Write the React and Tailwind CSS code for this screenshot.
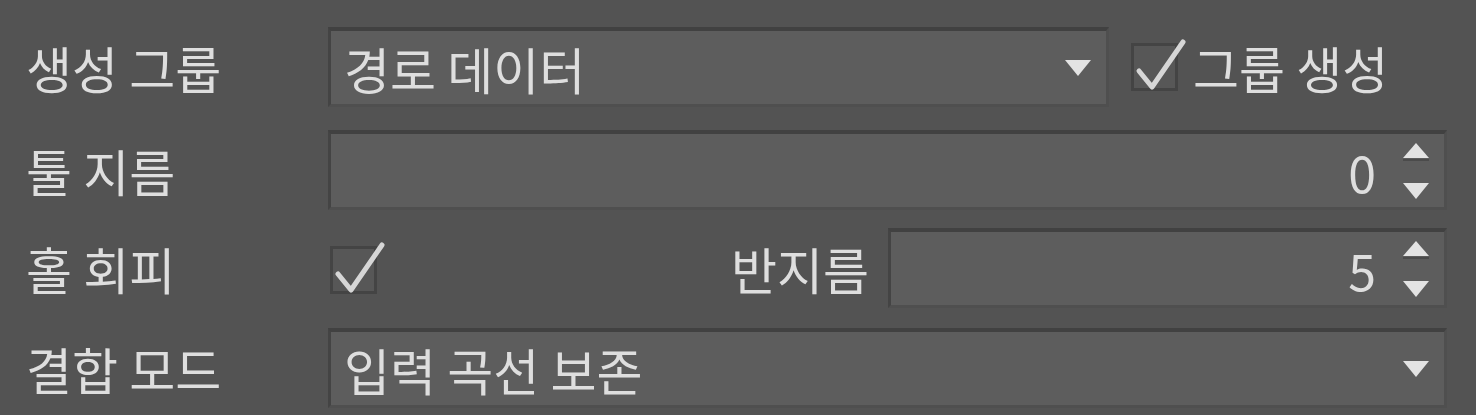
import React from "react";

const font = { fontFamily: '"Noto Sans CJK KR", "Noto Sans", sans-serif' };

function DownTri({ className = "" }) {
  return (
    <svg width="28" height="18" viewBox="0 0 28 18" className={className}>
      <polygon points="1,1 27,1 14,17" fill="#e3e3e3" />
    </svg>
  );
}

function Spinner() {
  return (
    <div className="flex flex-col items-center gap-[20px]">
      <svg width="28" height="20" viewBox="0 0 28 20">
        <polygon points="14,1 27,16 1,16" fill="#e3e3e3" />
        <rect x="1" y="17" width="26" height="2" fill="#3f3f3f" opacity="0.6" />
      </svg>
      <svg width="28" height="18" viewBox="0 0 28 18">
        <polygon points="1,1 27,1 14,17" fill="#e3e3e3" />
      </svg>
    </div>
  );
}

function Check() {
  return (
    <div className="relative w-[47px] h-[48px]">
      <div className="absolute inset-0 border-[3px] border-[#444444] bg-[#575757]" />
      <svg
        className="absolute left-0 top-[-6px]"
        width="56"
        height="58"
        viewBox="0 0 56 58"
      >
        <path
          d="M8 34 L21 50 L52 5"
          fill="none"
          stroke="#d6d6d6"
          strokeWidth="5"
          strokeLinecap="round"
          strokeLinejoin="round"
        />
      </svg>
    </div>
  );
}

function Field({ className = "", children }) {
  return (
    <div
      className={
        "h-[80px] bg-[#5d5d5d] border-t-[4px] border-l-[3px] border-r-[3px] border-b-[3px] border-t-[#414141] border-l-[#444444] border-r-[#4f4f4f] border-b-[#4f4f4f] flex items-center " +
        className
      }
    >
      {children}
    </div>
  );
}

export default function App() {
  return (
    <div
      className="w-[1476px] h-[415px] bg-[#535353] text-[#dedede] text-[50px] leading-none overflow-hidden pt-[27px] pr-[29px]"
      style={font}
    >
      {/* Row 1 */}
      <div className="flex items-center h-[80px]">
        <div className="w-[328px] pl-[26px] shrink-0">생성 그룹</div>
        <Field className="w-[781px] pl-[13px] pr-[14px] justify-between">
          <span>경로 데이터</span>
          <DownTri />
        </Field>
        <div className="ml-[22px] flex items-center">
          <Check />
          <span className="ml-[15px]">그룹 생성</span>
        </div>
      </div>

      {/* Row 2 */}
      <div className="flex items-center h-[80px] mt-[23px]">
        <div className="w-[328px] pl-[26px] shrink-0">툴 지름</div>
        <Field className="flex-1 justify-end pr-[14px]">
          <span className="mr-[26px]">0</span>
          <Spinner />
        </Field>
      </div>

      {/* Row 3 */}
      <div className="flex items-center h-[80px] mt-[18px]">
        <div className="w-[328px] pl-[26px] shrink-0">홀 회피</div>
        <div className="ml-[2px] mt-[4px]">
          <Check />
        </div>
        <div className="flex-1 text-right pr-[19px]">반지름</div>
        <Field className="w-[559px] justify-end pr-[14px]">
          <span className="mr-[26px]">5</span>
          <Spinner />
        </Field>
      </div>

      {/* Row 4 */}
      <div className="flex items-center h-[80px] mt-[20px]">
        <div className="w-[328px] pl-[26px] shrink-0">결합 모드</div>
        <Field className="flex-1 pl-[13px] pr-[14px] justify-between">
          <span>입력 곡선 보존</span>
          <DownTri />
        </Field>
      </div>
    </div>
  );
}
